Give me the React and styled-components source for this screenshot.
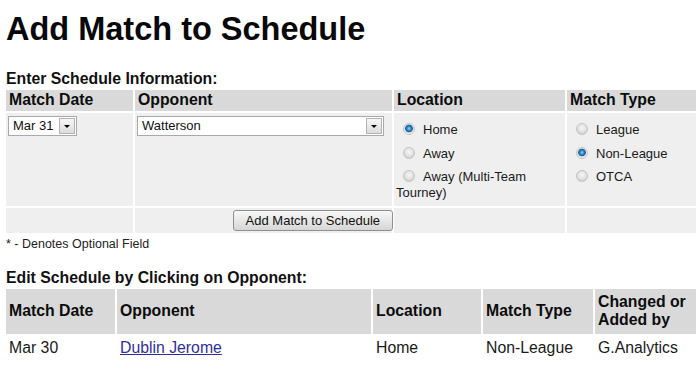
import React from 'react';
import styled, { createGlobalStyle } from 'styled-components';

const GlobalStyle = createGlobalStyle`
  html, body {
    margin: 0;
    padding: 0;
    background: #fff;
  }
  body {
    font-family: "Liberation Sans", Arial, sans-serif;
    color: #111;
    overflow: hidden;
  }
`;

const Page = styled.div`
  padding: 11px 0 0 6px;
`;

const Title = styled.h1`
  margin: 0;
  font-size: 32.5px;
  line-height: 36px;
  font-weight: bold;
  color: #080808;
`;

const Caption = styled.h2`
  margin: ${(p) => p.$top}px 0 0;
  font-size: 15.8px;
  line-height: 18px;
  font-weight: bold;
`;

const Grid = styled.table`
  margin-left: -2px;
  border-collapse: separate;
  border-spacing: 2px;
  table-layout: fixed;
  width: ${(p) => p.$width}px;
`;

const Head = styled.th`
  box-sizing: border-box;
  width: ${(p) => p.$w}px;
  background: #d9d9d9;
  text-align: left;
  vertical-align: middle;
  font-size: 15.8px;
  line-height: 18px;
  font-weight: bold;
  color: #0c0c0c;
  padding: ${(p) => (p.$tall ? '4px 3px 5px' : '1px 3px 2px')};
`;

const Cell = styled.td`
  background: #efefef;
  vertical-align: top;
  font-size: 13px;
  line-height: 16px;
  padding: 3px 2px;
  text-align: ${(p) => p.$align || 'left'};
`;

const ChoiceCell = styled(Cell)`
  padding: 9px 2px 5px 2px;
`;

const ButtonCell = styled(Cell)`
  padding: 2px 0;
`;

const DataCell = styled.td`
  background: #fff;
  font-size: 15.8px;
  line-height: 18px;
  padding: 3px 3px 3px;
  color: #1a1a1a;
`;

const Select = styled.div`
  display: flex;
  align-items: center;
  justify-content: space-between;
  box-sizing: border-box;
  width: ${(p) => p.$width}px;
  height: 20px;
  border: 1px solid #a9a9a9;
  background: #fff;
  font-size: 13px;
  padding-left: 4px;
  color: #111;
`;

const Arrow = styled.span`
  display: flex;
  align-items: center;
  justify-content: center;
  box-sizing: border-box;
  width: 16px;
  height: 16px;
  margin-right: 1px;
  border: 1px solid #b3b3b3;
  background: linear-gradient(#f6f6f6, #dcdcdc);

  &::after {
    content: '';
    border-left: 3px solid transparent;
    border-right: 3px solid transparent;
    border-top: 3px solid #000;
  }
`;

const Option = styled.div`
  margin-bottom: 7.5px;
  color: #1a1a1a;
  &:last-child {
    margin-bottom: 0;
  }
`;

const Radio = styled.span`
  display: inline-block;
  box-sizing: border-box;
  width: 12px;
  height: 12px;
  margin: 0 8px 0 7px;
  vertical-align: -1px;
  border-radius: 50%;
  border: 1px solid #c4c4c4;
  background: ${(p) =>
    p.$checked
      ? 'radial-gradient(circle at 50% 45%, #9fd6f7 0, #2c86c9 2px, #1d5f9c 3.5px, #e4e4e4 4.2px, #f4f4f4 6px)'
      : 'radial-gradient(circle at 50% 40%, #f6f6f6 0, #e2e2e2 4px, #cdcdcd 6px)'};
`;

const Button = styled.button`
  box-sizing: border-box;
  height: 21px;
  margin-right: -1px;
  padding: 0 12px;
  font-family: "Liberation Sans", Arial, sans-serif;
  font-size: 13px;
  color: #111;
  border: 1px solid #8f8f8f;
  border-radius: 3px;
  background: linear-gradient(#f8f8f8, #e4e4e4 60%, #d6d6d6);
`;

const Note = styled.div`
  margin-top: 1px;
  font-size: 12.5px;
  line-height: 16px;
  color: #222;
`;

const Link = styled.a`
  color: #2f2f9c;
  text-decoration: underline;
`;

const RadioGroup = ({ options, checked }) => (
  <>
    {options.map((o) => (
      <Option key={o}>
        <Radio $checked={o === checked} />
        {o}
      </Option>
    ))}
  </>
);

export default function App() {
  return (
    <Page>
      <GlobalStyle />
      <Title>Add Match to Schedule</Title>

      <Caption $top={23}>Enter Schedule Information:</Caption>
      <Grid $width={694}>
        <thead>
          <tr>
            <Head $w={127}>Match Date</Head>
            <Head $w={257}>Opponent</Head>
            <Head $w={171}>Location</Head>
            <Head $w={129}>Match Type</Head>
          </tr>
        </thead>
        <tbody>
          <tr>
            <Cell>
              <Select $width={69}>
                Mar 31
                <Arrow />
              </Select>
            </Cell>
            <Cell>
              <Select $width={247}>
                Watterson
                <Arrow />
              </Select>
            </Cell>
            <ChoiceCell>
              <RadioGroup
                options={['Home', 'Away', 'Away (Multi-Team Tourney)']}
                checked='Home'
              />
            </ChoiceCell>
            <ChoiceCell>
              <RadioGroup
                options={['League', 'Non-League', 'OTCA']}
                checked='Non-League'
              />
            </ChoiceCell>
          </tr>
          <tr>
            <Cell />
            <ButtonCell $align='right'>
              <Button>Add Match to Schedule</Button>
            </ButtonCell>
            <Cell />
            <Cell />
          </tr>
        </tbody>
      </Grid>
      <Note>* - Denotes Optional Field</Note>

      <Caption $top={17}>Edit Schedule by Clicking on Opponent:</Caption>
      <Grid $width={694}>
        <thead>
          <tr>
            <Head $tall $w={109}>Match Date</Head>
            <Head $tall $w={254}>Opponent</Head>
            <Head $tall $w={108}>Location</Head>
            <Head $tall $w={110}>Match Type</Head>
            <Head $tall $w={101}>Changed or Added by</Head>
          </tr>
        </thead>
        <tbody>
          <tr>
            <DataCell>Mar 30</DataCell>
            <DataCell>
              <Link href='#'>Dublin Jerome</Link>
            </DataCell>
            <DataCell>Home</DataCell>
            <DataCell>Non-League</DataCell>
            <DataCell>G.Analytics</DataCell>
          </tr>
        </tbody>
      </Grid>
    </Page>
  );
}
